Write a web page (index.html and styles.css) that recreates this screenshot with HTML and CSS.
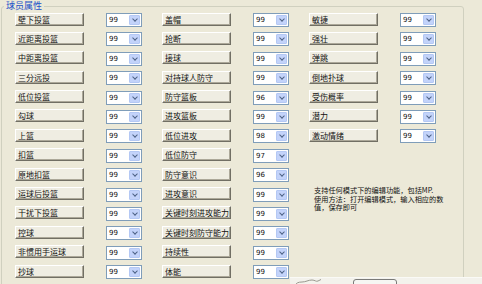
FILE: index.html
```html
<!DOCTYPE html>
<html>
<head>
  <title>球员属性</title>
  <link rel="stylesheet" href="styles.css">
</head>
<body>
  <fieldset class="grupo">
    <legend>球员属性</legend>
    <div class="columnas">
      <!-- columna 1 -->
      <div class="columna">
        <div class="fila"><button class="etiqueta">壁下投篮</button><div class="combo"><span>99</span><b class="flecha"></b></div></div>
        <div class="fila"><button class="etiqueta">近距离投篮</button><div class="combo"><span>99</span><b class="flecha"></b></div></div>
        <div class="fila"><button class="etiqueta">中距离投篮</button><div class="combo"><span>99</span><b class="flecha"></b></div></div>
        <div class="fila"><button class="etiqueta">三分远投</button><div class="combo"><span>99</span><b class="flecha"></b></div></div>
        <div class="fila"><button class="etiqueta">低位投篮</button><div class="combo"><span>99</span><b class="flecha"></b></div></div>
        <div class="fila"><button class="etiqueta">勾球</button><div class="combo"><span>99</span><b class="flecha"></b></div></div>
        <div class="fila"><button class="etiqueta">上篮</button><div class="combo"><span>99</span><b class="flecha"></b></div></div>
        <div class="fila"><button class="etiqueta">扣篮</button><div class="combo"><span>99</span><b class="flecha"></b></div></div>
        <div class="fila"><button class="etiqueta">原地扣篮</button><div class="combo"><span>99</span><b class="flecha"></b></div></div>
        <div class="fila"><button class="etiqueta">运球后投篮</button><div class="combo"><span>99</span><b class="flecha"></b></div></div>
        <div class="fila"><button class="etiqueta">干扰下投篮</button><div class="combo"><span>99</span><b class="flecha"></b></div></div>
        <div class="fila"><button class="etiqueta">控球</button><div class="combo"><span>99</span><b class="flecha"></b></div></div>
        <div class="fila"><button class="etiqueta">非惯用手运球</button><div class="combo"><span>99</span><b class="flecha"></b></div></div>
        <div class="fila"><button class="etiqueta">抄球</button><div class="combo"><span>99</span><b class="flecha"></b></div></div>
        <div class="fila"><button class="etiqueta"></button><div class="combo"><span></span><b class="flecha"></b></div></div>
      </div>
      <!-- columna 2 -->
      <div class="columna">
        <div class="fila"><button class="etiqueta">盖帽</button><div class="combo"><span>99</span><b class="flecha"></b></div></div>
        <div class="fila"><button class="etiqueta">抢断</button><div class="combo"><span>99</span><b class="flecha"></b></div></div>
        <div class="fila"><button class="etiqueta">接球</button><div class="combo"><span>99</span><b class="flecha"></b></div></div>
        <div class="fila"><button class="etiqueta">对持球人防守</button><div class="combo"><span>99</span><b class="flecha"></b></div></div>
        <div class="fila"><button class="etiqueta">防守篮板</button><div class="combo"><span>96</span><b class="flecha"></b></div></div>
        <div class="fila"><button class="etiqueta">进攻篮板</button><div class="combo"><span>99</span><b class="flecha"></b></div></div>
        <div class="fila"><button class="etiqueta">低位进攻</button><div class="combo"><span>98</span><b class="flecha"></b></div></div>
        <div class="fila"><button class="etiqueta">低位防守</button><div class="combo"><span>97</span><b class="flecha"></b></div></div>
        <div class="fila"><button class="etiqueta">防守意识</button><div class="combo"><span>96</span><b class="flecha"></b></div></div>
        <div class="fila"><button class="etiqueta">进攻意识</button><div class="combo"><span>99</span><b class="flecha"></b></div></div>
        <div class="fila"><button class="etiqueta">关键时刻进攻能力</button><div class="combo"><span>99</span><b class="flecha"></b></div></div>
        <div class="fila"><button class="etiqueta">关键时刻防守能力</button><div class="combo"><span>99</span><b class="flecha"></b></div></div>
        <div class="fila"><button class="etiqueta">持续性</button><div class="combo"><span>99</span><b class="flecha"></b></div></div>
        <div class="fila"><button class="etiqueta">体能</button><div class="combo"><span>99</span><b class="flecha"></b></div></div>
        <div class="fila"><button class="etiqueta"></button><div class="combo"><span></span><b class="flecha"></b></div></div>
      </div>
      <!-- columna 3 -->
      <div class="columna">
        <div class="fila"><button class="etiqueta">敏捷</button><div class="combo"><span>99</span><b class="flecha"></b></div></div>
        <div class="fila"><button class="etiqueta">强壮</button><div class="combo"><span>99</span><b class="flecha"></b></div></div>
        <div class="fila"><button class="etiqueta">弹跳</button><div class="combo"><span>99</span><b class="flecha"></b></div></div>
        <div class="fila"><button class="etiqueta">倒地扑球</button><div class="combo"><span>99</span><b class="flecha"></b></div></div>
        <div class="fila"><button class="etiqueta">受伤概率</button><div class="combo"><span>99</span><b class="flecha"></b></div></div>
        <div class="fila"><button class="etiqueta">潜力</button><div class="combo"><span>99</span><b class="flecha"></b></div></div>
        <div class="fila"><button class="etiqueta">激动情绪</button><div class="combo"><span>99</span><b class="flecha"></b></div></div>
        <p class="nota">支持任何模式下的编辑功能，包括MP.<br>使用方法：打开编辑模式，输入相应的数<br>值，保存即可</p>
      </div>
    </div>
  </fieldset>

  <!-- barra de abajo, tapa parte del grupo -->
  <div class="barra">
    <svg class="curva" width="28" height="7" viewBox="0 0 28 7">
      <path d="M1 7 C2 4 4 3 8 3 C12 3 14 1 18 1 C21 1 22 3 24 2 C25 1.5 26 1 27 0.5" fill="none" stroke="#9a998f" stroke-width="1"/>
    </svg>
    <button class="aceptar">确定</button>
  </div>
</body>
</html>
```

FILE: styles.css
```css
body {
  margin: 0;
  width: 482px;
  height: 284px;
  overflow: hidden;
  position: relative;
  background-color: #ECE9D8;
  font-family: "Noto Sans CJK SC", "DejaVu Sans", sans-serif;
  color: #111111;
}

.grupo {
  margin: 0 0 0 1px;
  padding: 0.5px 0 0 0;
  width: 461px;
  min-width: 0;
  height: 300px;
  border: 1px solid #D0D0BF;
  border-radius: 3px;
}

.grupo legend {
  margin-left: 2px;
  padding: 0 2px;
  font-size: 9px;
  line-height: 12px;
  color: #2150C8;
}

.columnas {
  display: grid;
  grid-template-columns: repeat(3, 127px);
  column-gap: 20px;
  padding-left: 13px;
  align-items: start;
}

.columna {
  display: flex;
  flex-direction: column;
}

.fila {
  display: flex;
  align-items: flex-start;
  gap: 22px;
  height: 19.4px;
}

.etiqueta {
  box-sizing: border-box;
  width: 69px;
  height: 13px;
  margin: 0;
  padding: 0 0 0 2px;
  text-align: left;
  font-family: "Noto Sans CJK SC", sans-serif;
  font-size: 8px;
  line-height: 11px;
  color: #111111;
  white-space: nowrap;
  overflow: hidden;
  background-color: #EFEDE2;
  border: 1px solid;
  border-color: #FFFFFF #716F64 #716F64 #FFFFFF;
  box-shadow: inset -1px -1px 0 #ACA899;
}

.combo {
  box-sizing: border-box;
  width: 36px;
  height: 14px;
  margin-top: 0.5px;
  display: flex;
  align-items: center;
  justify-content: space-between;
  background-color: #FFFFFF;
  border: 1px solid #7F9DB9;
  padding: 0 1px 0 2px;
}

.combo span {
  font-family: "DejaVu Sans", sans-serif;
  font-size: 7px;
  line-height: 10px;
  color: #111111;
}

.flecha {
  box-sizing: border-box;
  width: 11px;
  height: 10px;
  margin-left: auto;
  display: flex;
  align-items: center;
  justify-content: center;
  background-color: #C3D3FA;
  border: 1px solid #B4C8F4;
  border-radius: 1px;
}

.flecha::after {
  content: "";
  width: 3px;
  height: 3px;
  margin-top: -2px;
  border-right: 1.5px solid #4D6185;
  border-bottom: 1.5px solid #4D6185;
  transform: rotate(45deg);
}

.nota {
  width: max-content;
  margin: 38px 0 0 5px;
  font-family: "Noto Sans CJK SC", sans-serif;
  font-size: 7.2px;
  line-height: 8.5px;
  white-space: nowrap;
  color: #111111;
}

.barra {
  position: absolute;
  left: 290px;
  top: 277px;
  right: 0;
  bottom: 0;
  display: flex;
  align-items: flex-start;
  padding-left: 4px;
  background-color: #F3F2EC;
  border-top: 1px solid #FAFAF6;
}

.curva {
  margin-top: 1px;
}

.aceptar {
  margin: 1px 0 0 31px;
  width: 44px;
  height: 20px;
  padding: 0;
  font-family: "Noto Sans CJK SC", sans-serif;
  font-size: 8px;
  line-height: 9px;
  color: #111111;
  background-color: #F6F6F3;
  border: 1px solid #7A7A78;
  border-radius: 3px;
}
```
